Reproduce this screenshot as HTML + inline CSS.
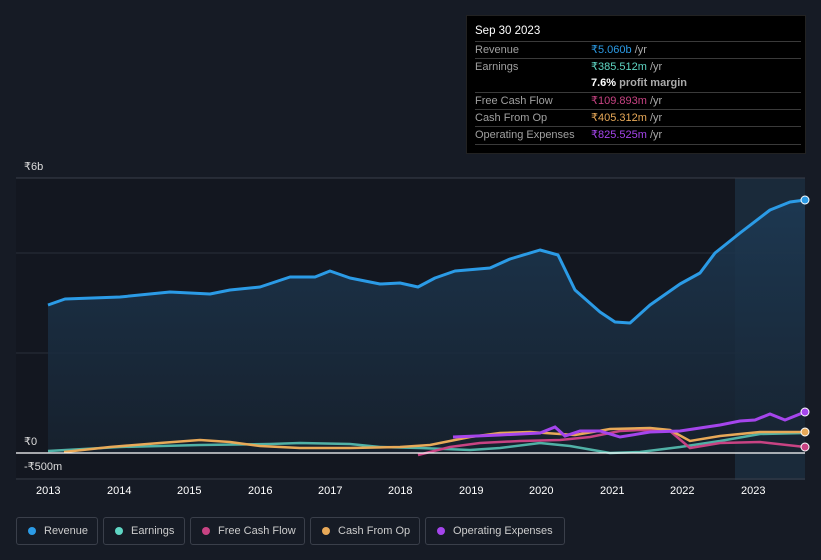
<!DOCTYPE html><html><head><style>
body{margin:0;width:821px;height:560px;background:#161b25;font-family:"Liberation Sans",sans-serif;position:relative;overflow:hidden;color:#ddd}
.tt{position:absolute;left:466px;top:15px;width:340px;height:139px;background:#000;border:1px solid #222;box-sizing:border-box;font-size:11px}
.tt .h{position:absolute;left:8px;top:9px;color:#fff;font-size:11.5px}
.row{position:absolute;left:8px;width:326px;border-top:1px solid #3a3a3a;height:17px;line-height:17px;color:#a0a0a0}
.row span{position:absolute;left:116px}
.lg{position:absolute;top:517px;height:28px;border:1px solid #3a3f4a;border-radius:3px;box-sizing:border-box;font-size:11px;color:#ccc;line-height:26px;padding-left:27px}
.lg i{position:absolute;left:11px;top:9px;width:8px;height:8px;border-radius:50%}
.ax{position:absolute;top:485px;font-size:11px;color:#fff}
</style></head><body>
<svg width="821" height="560" style="position:absolute;left:0;top:0">
<defs><linearGradient id="g" x1="0" y1="0" x2="0" y2="1"><stop offset="0" stop-color="#1d3a55"/><stop offset="1" stop-color="#17222f"/></linearGradient></defs>
<rect x="16" y="178" width="789" height="302" fill="#131720"/>
<rect x="735" y="178" width="70" height="302" fill="#1a2a3a"/>
<line x1="16" y1="178" x2="805" y2="178" stroke="#3a3f4a"/>
<line x1="16" y1="253" x2="805" y2="253" stroke="#2a2f3a"/>
<line x1="16" y1="353" x2="805" y2="353" stroke="#2a2f3a"/>
<path d="M48,305 L65,299 L120,297 L170,292 L210,294 L230,290 L260,287 L290,277 L315,277 L330,271 L350,278 L380,284 L400,283 L418,287 L435,278 L455,271 L490,268 L510,259 L540,250 L558,255 L575,290 L600,312 L615,322 L630,323 L650,305 L680,284 L700,273 L715,253 L740,233 L770,210 L790,202 L805,200 L805,453 L48,453Z" fill="url(#g)" opacity=".85"/>
<path d="M48,305 L65,299 L120,297 L170,292 L210,294 L230,290 L260,287 L290,277 L315,277 L330,271 L350,278 L380,284 L400,283 L418,287 L435,278 L455,271 L490,268 L510,259 L540,250 L558,255 L575,290 L600,312 L615,322 L630,323 L650,305 L680,284 L700,273 L715,253 L740,233 L770,210 L790,202 L805,200" fill="none" stroke="#2b9be6" stroke-width="3" stroke-linejoin="round"/>
<path d="M48,451 L120,447 L200,445 L270,444 L300,443 L350,444 L380,447 L420,448 L470,450 L500,448 L540,443 L570,446 L610,453 L640,452 L680,447 L720,441 L760,434 L805,433" fill="none" stroke="#5fd6c4" stroke-width="2.5" opacity=".8"/>
<path d="M418,455 L450,447 L480,443 L520,441 L560,440 L590,437 L620,431 L640,430 L670,431 L690,448 L720,443 L760,442 L805,447" fill="none" stroke="#c84383" stroke-width="2.5"/>
<path d="M64,452 L110,447 L160,443 L200,440 L230,442 L260,446 L300,448 L350,448 L400,447 L430,445 L470,437 L500,433 L530,432 L575,435 L610,429 L650,428 L670,430 L690,441 L720,436 L760,432 L805,432" fill="none" stroke="#e8a958" stroke-width="2.5"/>
<path d="M453,437 L500,435 L540,433 L555,427 L565,436 L580,431 L600,431 L620,437 L650,432 L680,431 L720,425 L740,421 L755,420 L770,414 L785,420 L805,412" fill="none" stroke="#a545ec" stroke-width="3"/>
<line x1="16" y1="453" x2="805" y2="453" stroke="#fff" stroke-width="1.2"/>
<line x1="16" y1="479" x2="805" y2="479" stroke="#3a3f4a"/>
<circle cx="805" cy="200" r="4" fill="#2b9be6" stroke="#fff"/>
<circle cx="805" cy="412" r="4" fill="#a545ec" stroke="#fff"/>
<circle cx="805" cy="432" r="4" fill="#e8a958" stroke="#fff"/>
<circle cx="805" cy="447" r="4" fill="#c84383" stroke="#fff"/>
</svg>
<div style="position:absolute;left:24px;top:160px;font-size:11px;color:#ddd">₹6b</div>
<div style="position:absolute;left:24px;top:435px;font-size:11px;color:#ddd">₹0</div>
<div style="position:absolute;left:24px;top:460px;font-size:11px;color:#ddd">-₹500m</div>
<div class="ax" style="left:36px">2013</div><div class="ax" style="left:107px">2014</div><div class="ax" style="left:177px">2015</div><div class="ax" style="left:248px">2016</div><div class="ax" style="left:318px">2017</div><div class="ax" style="left:388px">2018</div><div class="ax" style="left:459px">2019</div><div class="ax" style="left:529px">2020</div><div class="ax" style="left:600px">2021</div><div class="ax" style="left:670px">2022</div><div class="ax" style="left:741px">2023</div>
<div class="tt"><div class="h">Sep 30 2023</div>
<div class="row" style="top:25px">Revenue<span style="color:#2b9be6">₹5.060b <b style="color:#aaa;font-weight:normal">/yr</b></span></div>
<div class="row" style="top:42px">Earnings<span style="color:#5fd6c4">₹385.512m <b style="color:#aaa;font-weight:normal">/yr</b></span></div>
<div class="row" style="top:59px;border-top:none"><span style="color:#fff;font-weight:bold">7.6% <b style="color:#aaa">profit margin</b></span></div>
<div class="row" style="top:76px">Free Cash Flow<span style="color:#c84383">₹109.893m <b style="color:#aaa;font-weight:normal">/yr</b></span></div>
<div class="row" style="top:93px">Cash From Op<span style="color:#e8a958">₹405.312m <b style="color:#aaa;font-weight:normal">/yr</b></span></div>
<div class="row" style="top:110px">Operating Expenses<span style="color:#a545ec">₹825.525m <b style="color:#aaa;font-weight:normal">/yr</b></span></div>
<div class="row" style="top:128px;height:1px"></div>
</div>
<div class="lg" style="left:16px;width:82px"><i style="background:#2b9be6"></i>Revenue</div>
<div class="lg" style="left:103px;width:82px"><i style="background:#5fd6c4"></i>Earnings</div>
<div class="lg" style="left:190px;width:115px"><i style="background:#c84383"></i>Free Cash Flow</div>
<div class="lg" style="left:310px;width:110px"><i style="background:#e8a958"></i>Cash From Op</div>
<div class="lg" style="left:425px;width:140px"><i style="background:#a545ec"></i>Operating Expenses</div>
</body></html>
